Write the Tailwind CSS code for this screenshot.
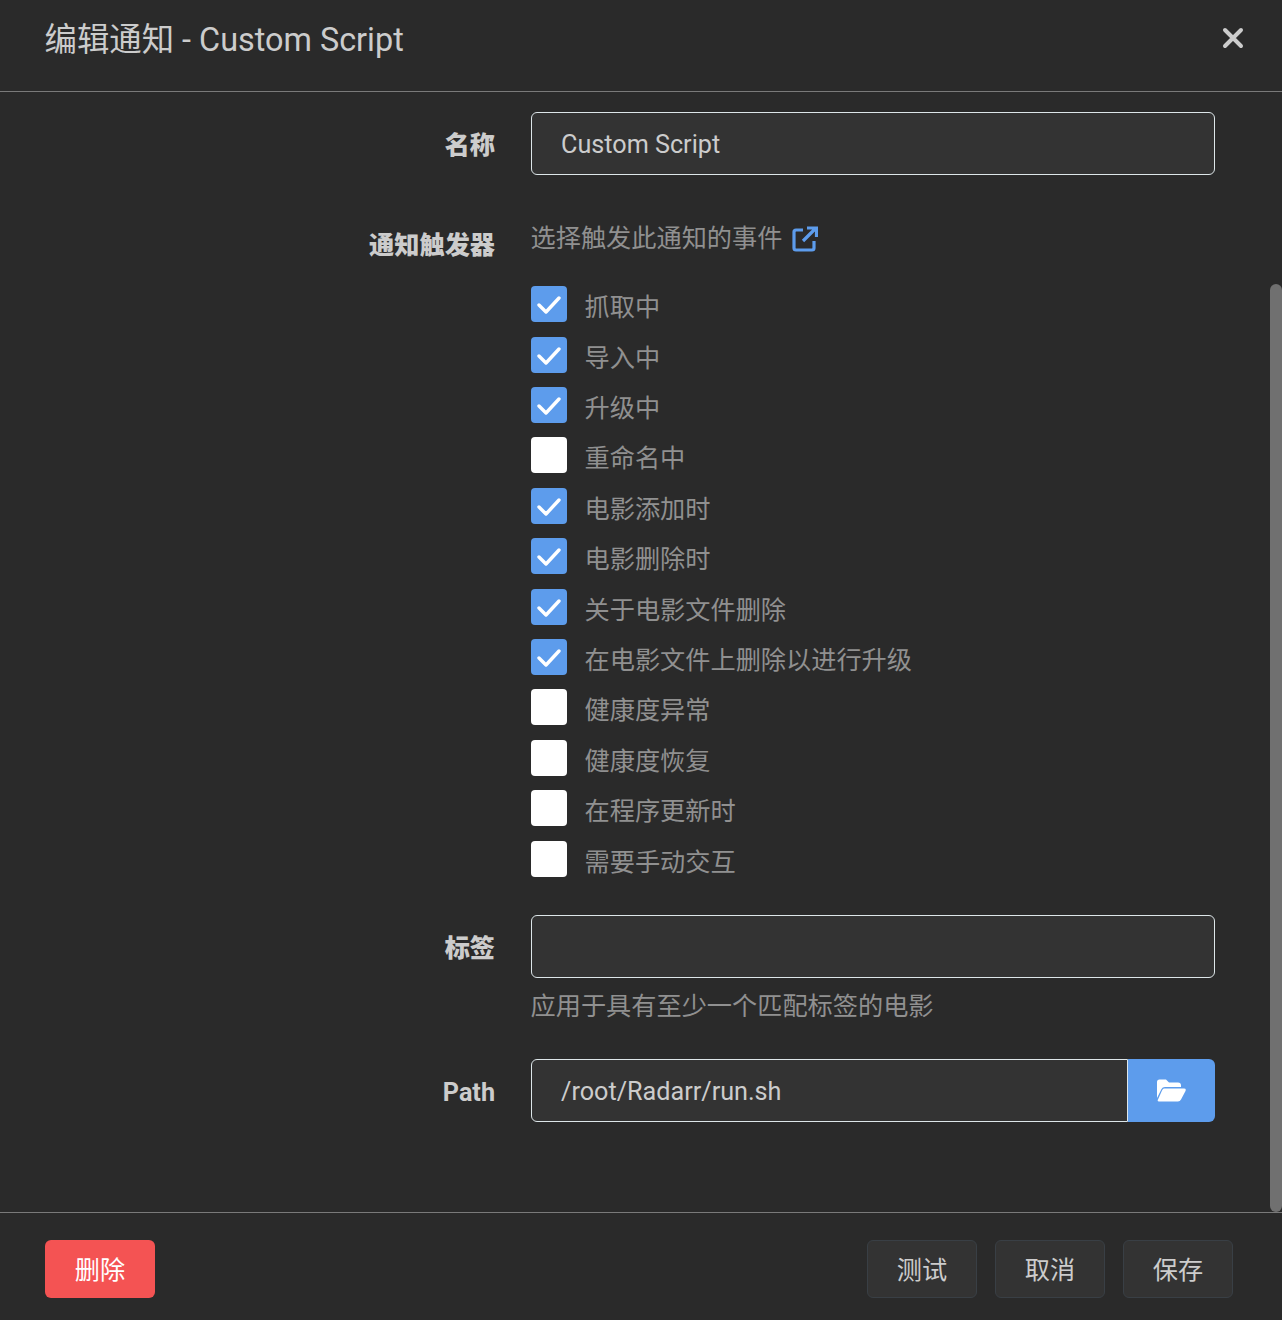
<!DOCTYPE html>
<html lang="zh">
<head>
  <meta charset="UTF-8" />
  <title>编辑通知 - Custom Script</title>
  <script src="https://cdn.jsdelivr.net/npm/@tailwindcss/browser@4"></script>
</head>
<body class="bg-[#2a2a2a] font-['Roboto','Noto_Sans_CJK_SC',sans-serif] overflow-hidden">
  <div class="h-[1320px] flex flex-col">
    <header class="h-[92px] shrink-0 border-b border-[#7a7a7a] pl-[44.5px] pr-[38px] pt-[17px] flex justify-between items-start">
      <h1 class="text-[32.4px] leading-[46px] text-[#cccccc] font-normal">编辑通知 - Custom Script</h1>
      <svg class="mt-[10px]" width="22" height="22" viewBox="0 0 22 22"><path d="M3 3 L19 19 M19 3 L3 19" stroke="#cccccc" stroke-width="4" stroke-linecap="round"/></svg>
    </header>

    <main class="flex-1 relative pt-[20px]">
      <div class="absolute right-0 top-[192px] bottom-0 w-[12px] bg-[#707070] rounded-t-[6px] rounded-b-[6px]"></div>

      <div class="flex mb-[43px]">
        <label class="w-[495px] pt-[2px] text-right text-[25.2px] leading-[63px] font-black text-[#cccccc]">名称</label>
        <div class="ml-[36px] w-[684px] h-[63px] border border-[#dde6e9] rounded-[6px] bg-[#333333] px-[29px] text-[25.2px] leading-[63px] text-[#cccccc]">Custom Script</div>
      </div>

      <div class="flex mb-[23.7px]">
        <label class="w-[495px] text-right text-[25.2px] leading-[52px] font-black text-[#cccccc]">通知触发器</label>
        <div class="ml-[36px] w-[684px]">
          <div class="-ml-[0.5px] flex items-center h-[38px] text-[25.2px] text-[#909090] mb-[28.3px]">
            选择触发此通知的事件
            <svg class="ml-[9.5px]" width="26" height="26" viewBox="0 0 26 26" fill="none"><path d="M11 4 H4 Q2 4 2 6 V22 Q2 24 4 24 H20 Q22 24 22 22 V15" stroke="#5d9cec" stroke-width="3.2"/><path d="M11 15 L23 3 M15 2 H24.5 V11" stroke="#5d9cec" stroke-width="3.2"/></svg>
          </div>
          <div class="flex flex-col">
            <div class="flex items-start h-[50.4px]"><span class="w-[36px] h-[36px] rounded-[4px] bg-[#5d9cec] flex items-center justify-center"><svg width="24" height="24" viewBox="0 0 24 24" fill="none"><path d="M2 13 L9 20 L22 6" stroke="#fff" stroke-width="3.4" stroke-linecap="round" stroke-linejoin="round"/></svg></span><span class="ml-[17.5px] text-[25.2px] leading-[44px] text-[#909090]">抓取中</span></div>
            <div class="flex items-start h-[50.4px]"><span class="w-[36px] h-[36px] rounded-[4px] bg-[#5d9cec] flex items-center justify-center"><svg width="24" height="24" viewBox="0 0 24 24" fill="none"><path d="M2 13 L9 20 L22 6" stroke="#fff" stroke-width="3.4" stroke-linecap="round" stroke-linejoin="round"/></svg></span><span class="ml-[17.5px] text-[25.2px] leading-[44px] text-[#909090]">导入中</span></div>
            <div class="flex items-start h-[50.4px]"><span class="w-[36px] h-[36px] rounded-[4px] bg-[#5d9cec] flex items-center justify-center"><svg width="24" height="24" viewBox="0 0 24 24" fill="none"><path d="M2 13 L9 20 L22 6" stroke="#fff" stroke-width="3.4" stroke-linecap="round" stroke-linejoin="round"/></svg></span><span class="ml-[17.5px] text-[25.2px] leading-[44px] text-[#909090]">升级中</span></div>
            <div class="flex items-start h-[50.4px]"><span class="w-[36px] h-[36px] rounded-[4px] bg-white"></span><span class="ml-[17.5px] text-[25.2px] leading-[44px] text-[#909090]">重命名中</span></div>
            <div class="flex items-start h-[50.4px]"><span class="w-[36px] h-[36px] rounded-[4px] bg-[#5d9cec] flex items-center justify-center"><svg width="24" height="24" viewBox="0 0 24 24" fill="none"><path d="M2 13 L9 20 L22 6" stroke="#fff" stroke-width="3.4" stroke-linecap="round" stroke-linejoin="round"/></svg></span><span class="ml-[17.5px] text-[25.2px] leading-[44px] text-[#909090]">电影添加时</span></div>
            <div class="flex items-start h-[50.4px]"><span class="w-[36px] h-[36px] rounded-[4px] bg-[#5d9cec] flex items-center justify-center"><svg width="24" height="24" viewBox="0 0 24 24" fill="none"><path d="M2 13 L9 20 L22 6" stroke="#fff" stroke-width="3.4" stroke-linecap="round" stroke-linejoin="round"/></svg></span><span class="ml-[17.5px] text-[25.2px] leading-[44px] text-[#909090]">电影删除时</span></div>
            <div class="flex items-start h-[50.4px]"><span class="w-[36px] h-[36px] rounded-[4px] bg-[#5d9cec] flex items-center justify-center"><svg width="24" height="24" viewBox="0 0 24 24" fill="none"><path d="M2 13 L9 20 L22 6" stroke="#fff" stroke-width="3.4" stroke-linecap="round" stroke-linejoin="round"/></svg></span><span class="ml-[17.5px] text-[25.2px] leading-[44px] text-[#909090]">关于电影文件删除</span></div>
            <div class="flex items-start h-[50.4px]"><span class="w-[36px] h-[36px] rounded-[4px] bg-[#5d9cec] flex items-center justify-center"><svg width="24" height="24" viewBox="0 0 24 24" fill="none"><path d="M2 13 L9 20 L22 6" stroke="#fff" stroke-width="3.4" stroke-linecap="round" stroke-linejoin="round"/></svg></span><span class="ml-[17.5px] text-[25.2px] leading-[44px] text-[#909090]">在电影文件上删除以进行升级</span></div>
            <div class="flex items-start h-[50.4px]"><span class="w-[36px] h-[36px] rounded-[4px] bg-white"></span><span class="ml-[17.5px] text-[25.2px] leading-[44px] text-[#909090]">健康度异常</span></div>
            <div class="flex items-start h-[50.4px]"><span class="w-[36px] h-[36px] rounded-[4px] bg-white"></span><span class="ml-[17.5px] text-[25.2px] leading-[44px] text-[#909090]">健康度恢复</span></div>
            <div class="flex items-start h-[50.4px]"><span class="w-[36px] h-[36px] rounded-[4px] bg-white"></span><span class="ml-[17.5px] text-[25.2px] leading-[44px] text-[#909090]">在程序更新时</span></div>
            <div class="flex items-start h-[50.4px]"><span class="w-[36px] h-[36px] rounded-[4px] bg-white"></span><span class="ml-[17.5px] text-[25.2px] leading-[44px] text-[#909090]">需要手动交互</span></div>
          </div>
        </div>
      </div>

      <div class="flex mb-[32px]">
        <label class="w-[495px] pt-[2px] text-right text-[25.2px] leading-[63px] font-black text-[#cccccc]">标签</label>
        <div class="ml-[36px] w-[684px]">
          <div class="h-[63px] border border-[#dde6e9] rounded-[6px] bg-[#333333]"></div>
          <div class="-ml-[0.5px] mt-[9px] text-[25.2px] leading-[40px] text-[#909090]">应用于具有至少一个匹配标签的电影</div>
        </div>
      </div>

      <div class="flex">
        <label class="w-[495px] pt-[2px] text-right text-[25.2px] leading-[63px] font-bold text-[#cccccc]">Path</label>
        <div class="ml-[36px] w-[684px] h-[63px] flex">
          <div class="flex-1 border border-[#dde6e9] rounded-l-[6px] bg-[#333333] px-[29px] text-[25.2px] leading-[63px] text-[#cccccc]">/root/Radarr/run.sh</div>
          <div class="w-[87px] bg-[#5d9cec] rounded-r-[6px] flex items-center justify-center">
            <svg width="29" height="23" viewBox="0 0 29 23"><path d="M0 19 V3 Q0 0.5 2.5 0.5 H9 L12 3.5 H21 Q24 3.5 24 6.5 V8 H8 Q5.5 8 4.5 10 Z" fill="#fff"/><path d="M7 9.5 H27 Q29.5 9.5 28.5 12 L24 20.5 Q23 22.5 21 22.5 H2 Q0 22.5 1 20.5 L5 11.5 Q6 9.5 7 9.5 Z" fill="#fff"/></svg>
          </div>
        </div>
      </div>
    </main>

    <footer class="h-[108px] shrink-0 border-t border-[#7a7a7a] pt-[27px] pl-[45px] pr-[49px] flex justify-between items-start">
      <button class="w-[110px] h-[58px] pt-[4px] rounded-[6px] bg-[#f45353] text-white text-[25.2px]">删除</button>
      <div class="flex gap-[18px]">
        <button class="w-[110px] h-[58px] pt-[4px] rounded-[6px] bg-[#333333] border border-[#393f45] text-[#cccccc] text-[25.2px]">测试</button>
        <button class="w-[110px] h-[58px] pt-[4px] rounded-[6px] bg-[#333333] border border-[#393f45] text-[#cccccc] text-[25.2px]">取消</button>
        <button class="w-[110px] h-[58px] pt-[4px] rounded-[6px] bg-[#333333] border border-[#393f45] text-[#cccccc] text-[25.2px]">保存</button>
      </div>
    </footer>
  </div>
</body>
</html>
